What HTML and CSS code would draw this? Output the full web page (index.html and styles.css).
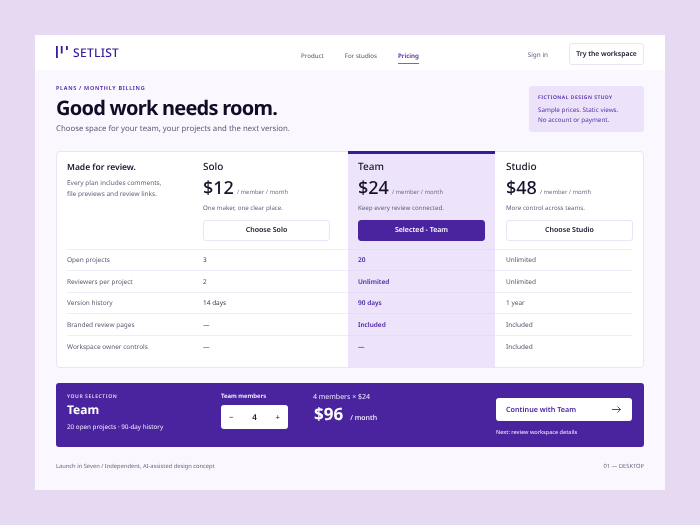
FILE: index.html
```html
<!DOCTYPE html>
<html lang="en">

<head>
    <meta charset="UTF-8">
    <meta name="viewport" content="width=device-width, initial-scale=1.0">
    <title>Setlist Pricing</title>
    <link rel="stylesheet" href="styles.css">
</head>

<body>

    <div class="window">
        <header class="topbar">
            <div class="brand">
                <svg class="brand-mark" width="12" height="12" viewBox="0 0 12 12">
                    <rect x="0" y="0" width="1.8" height="12" fill="#3a1a9c"></rect>
                    <rect x="4.8" y="0" width="1.8" height="7.5" fill="#3a1a9c"></rect>
                    <rect x="10" y="0" width="1.8" height="4" fill="#3a1a9c"></rect>
                </svg>
                <span class="brand-name">SETLIST</span>
            </div>
            <nav class="nav">
                <a>Product</a>
                <a>For studios</a>
                <a class="active">Pricing</a>
            </nav>
            <div class="top-actions">
                <a class="sign-in">Sign in</a>
                <button class="try-btn">Try the workspace</button>
            </div>
        </header>

        <main class="content">
            <section class="intro">
                <div>
                    <p class="eyebrow">PLANS / MONTHLY BILLING</p>
                    <h1>Good work needs room.</h1>
                    <p class="lead">Choose space for your team, your projects and the next version.</p>
                </div>
                <aside class="note">
                    <p class="note-title">FICTIONAL DESIGN STUDY</p>
                    <p>Sample prices. Static views.<br>No account or payment.</p>
                </aside>
            </section>

            <section class="plans">
                <div class="plan-row">
                    <div class="plan-cell plan-intro">
                        <h2>Made for review.</h2>
                        <p>Every plan includes comments,<br>file previews and review links.</p>
                    </div>
                    <div class="plan-cell solo">
                        <h3>Solo</h3>
                        <p class="price"><strong>$12</strong><span>/ member / month</span></p>
                        <p class="tagline">One maker, one clear place.</p>
                        <button class="choose">Choose Solo</button>
                    </div>
                    <div class="plan-cell team">
                        <h3>Team</h3>
                        <p class="price"><strong>$24</strong><span>/ member / month</span></p>
                        <p class="tagline">Keep every review connected.</p>
                        <button class="choose selected">Selected - Team</button>
                    </div>
                    <div class="plan-cell studio">
                        <h3>Studio</h3>
                        <p class="price"><strong>$48</strong><span>/ member / month</span></p>
                        <p class="tagline">More control across teams.</p>
                        <button class="choose">Choose Studio</button>
                    </div>
                </div>

                <div class="row">
                    <div class="label">Open projects</div>
                    <div>3</div>
                    <div class="team">20</div>
                    <div class="studio">Unlimited</div>
                </div>
                <div class="row">
                    <div class="label">Reviewers per project</div>
                    <div>2</div>
                    <div class="team">Unlimited</div>
                    <div class="studio">Unlimited</div>
                </div>
                <div class="row">
                    <div class="label">Version history</div>
                    <div>14 days</div>
                    <div class="team">90 days</div>
                    <div class="studio">1 year</div>
                </div>
                <div class="row">
                    <div class="label">Branded review pages</div>
                    <div>—</div>
                    <div class="team">Included</div>
                    <div class="studio">Included</div>
                </div>
                <div class="row last">
                    <div class="label">Workspace owner controls</div>
                    <div>—</div>
                    <div class="team">—</div>
                    <div class="studio">Included</div>
                </div>
            </section>

            <section class="summary">
                <div class="sum-plan">
                    <p class="sum-eyebrow">YOUR SELECTION</p>
                    <p class="sum-name">Team</p>
                    <p class="sum-detail">20 open projects · 90-day history</p>
                </div>
                <div class="sum-members">
                    <p class="members-label">Team members</p>
                    <div class="stepper">
                        <span>−</span>
                        <strong>4</strong>
                        <span>+</span>
                    </div>
                </div>
                <div class="sum-total">
                    <p class="total-calc">4 members × $24</p>
                    <p class="total"><strong>$96</strong><span>/ month</span></p>
                </div>
                <div class="sum-action">
                    <button class="continue">
                        Continue with Team
                        <svg width="9" height="7" viewBox="0 0 9 7" fill="none" stroke="#4a239f" stroke-width="0.9">
                            <path d="M0 3.5H8.4M5.4 0.5L8.4 3.5L5.4 6.5"></path>
                        </svg>
                    </button>
                    <p class="next">Next: review workspace details</p>
                </div>
            </section>

            <footer class="foot">
                <span>Launch in Seven / Independent, AI-assisted design concept</span>
                <span>01 — DESKTOP</span>
            </footer>
        </main>
    </div>

</body>

</html>
```

FILE: styles.css
```css
* {
    box-sizing: border-box;
}

body {
    margin: 0;
    height: 525px;
    padding: 35px;
    background: #e6daf3;
    font-family: 'Noto Sans', sans-serif;
    color: #16122b;
    overflow: hidden;
    text-rendering: geometricPrecision;
}

p, h1, h2, h3 {
    margin: 0;
}

button {
    font-family: inherit;
    text-rendering: geometricPrecision;
}

.window {
    width: 630px;
    height: 455px;
    background: #faf7ff;
    will-change: transform;
}

/* top bar */
.topbar {
    height: 35px;
    background: #fff;
    display: flex;
    align-items: center;
    padding: 0 21px;
}

.brand {
    width: 245px;
    display: flex;
    align-items: center;
    gap: 5px;
}

.brand-mark {
    margin-top: -2px;
}

.brand-name {
    font-size: 12px;
    font-weight: 500;
    letter-spacing: 0.3px;
    color: #3a1a9c;
}

.nav {
    display: flex;
    gap: 21px;
    font-size: 6.2px;
    color: #56526a;
    padding-top: 6px;
}

.nav a {
    position: relative;
}

.nav .active {
    color: #4a239f;
    font-weight: 600;
}

.nav .active::after {
    content: "";
    position: absolute;
    left: 0;
    right: 0;
    bottom: -4px;
    height: 1px;
    background: #c2574f;
}

.top-actions {
    margin-left: auto;
    display: flex;
    align-items: center;
    gap: 21px;
    padding-top: 2px;
}

.sign-in {
    font-size: 6.4px;
    color: #66627a;
    padding-top: 2px;
}

.try-btn {
    width: 75px;
    height: 22px;
    padding: 0;
    background: #fff;
    border: 1px solid #ebe3f7;
    border-radius: 3px;
    font-size: 6.8px;
    font-weight: 600;
    color: #16122b;
}

/* intro */
.content {
    padding: 15px 21px 0;
}

.intro {
    display: flex;
    justify-content: space-between;
    height: 52px;
}

.eyebrow {
    font-size: 5.5px;
    font-weight: 600;
    letter-spacing: 0.7px;
    color: #4a239f;
    line-height: 7px;
}

h1 {
    font-size: 20px;
    font-weight: 700;
    line-height: 28px;
    letter-spacing: -0.75px;
    margin-top: 2px;
    color: #100c26;
}

.lead {
    font-size: 7.8px;
    line-height: 12px;
    margin-top: 1px;
    color: #5e5a72;
}

.note {
    width: 115px;
    height: 46px;
    margin-top: 1px;
    padding: 9px;
    background: #ece3fa;
    border-radius: 3px;
    font-size: 6.3px;
    line-height: 10px;
    color: #5a35a8;
}

.note-title {
    font-size: 5px;
    font-weight: 600;
    letter-spacing: 0.5px;
    line-height: 7px;
    margin-bottom: 3px;
    color: #4a239f;
}

/* plans table */
.plans {
    margin-top: 14px;
    height: 217px;
    background: #fff;
    border: 1px solid #ebe3f7;
    border-radius: 4px;
    padding-left: 10px;
}

.plan-row, .row {
    display: grid;
    grid-template-columns: 136px 145px 147px 1fr;
}

.plan-row {
    height: 97.5px;
    margin-top: -1px;
}

.plan-cell {
    padding-top: 9px;
}

.plan-intro {
    padding-top: 11px;
}

.plan-intro h2 {
    font-size: 8.5px;
    font-weight: 600;
    line-height: 12px;
}

.plan-intro p {
    margin-top: 3px;
    font-size: 6.5px;
    line-height: 11px;
    color: #66627a;
}

.plan-cell h3 {
    font-size: 10px;
    font-weight: 500;
    line-height: 13px;
}

.price {
    margin-top: 2.5px;
    display: flex;
    align-items: baseline;
    gap: 3px;
    line-height: 24px;
}

.price strong {
    font-size: 18px;
    font-weight: 500;
}

.price span {
    font-size: 5.9px;
    color: #726e85;
}

.tagline {
    font-size: 6.2px;
    line-height: 10px;
    margin-top: -0.5px;
    color: #66627a;
}

.choose {
    display: block;
    width: 127px;
    height: 21px;
    margin-top: 6.5px;
    padding: 1px 0 0;
    background: #fff;
    border: 1px solid #ebe3f7;
    border-radius: 3px;
    font-size: 7px;
    font-weight: 600;
    color: #16122b;
}

.choose.selected {
    background: #4a239f;
    border-color: #4a239f;
    color: #fff;
}

.plan-cell.team {
    background: #ede4fb;
    border-top: 3px solid #3a1a9c;
    padding: 6px 10px 0;
}

.plan-cell.studio {
    padding-left: 11px;
}

.row {
    height: 21.5px;
    font-size: 6.5px;
    color: #3e3a52;
}

.row > div {
    display: flex;
    align-items: center;
    border-top: 1px solid #f1ecf9;
}

.row .label {
    color: #5e5a72;
}

.row .team {
    background: #ede4fb;
    border-top-color: #e6dcf6;
    padding-left: 10px;
    font-weight: 600;
    color: #4a239f;
}

.row .studio {
    margin-right: 11px;
    padding-left: 11px;
    color: #56526a;
}

.row.last {
    height: 32.5px;
}

.row.last > div {
    padding-bottom: 10px;
}

/* summary */
.summary {
    margin-top: 15px;
    height: 64px;
    background: #4a239f;
    border-radius: 3px;
    display: flex;
    color: #fff;
    padding: 9px 11px;
}

.sum-plan {
    width: 154px;
    padding-top: 2px;
}

.sum-eyebrow {
    font-size: 5px;
    font-weight: 600;
    letter-spacing: 0.6px;
    line-height: 7px;
    color: #e3d8f7;
}

.sum-name {
    font-size: 12px;
    font-weight: 700;
    line-height: 18px;
}

.sum-detail {
    font-size: 6.3px;
    line-height: 12px;
    margin-top: 2px;
    color: #efe8fb;
}

.sum-members {
    width: 92px;
}

.members-label {
    font-size: 6px;
    font-weight: 600;
    line-height: 9px;
}

.stepper {
    width: 67px;
    height: 24px;
    margin-top: 4px;
    background: #fff;
    border-radius: 3px;
    display: flex;
    align-items: center;
    justify-content: space-between;
    padding: 0 8px;
    font-size: 8px;
    color: #16122b;
}

.stepper strong {
    font-weight: 600;
}

.sum-total {
    width: 183px;
    padding-top: 1px;
}

.total-calc {
    font-size: 7px;
    line-height: 10px;
    color: #efe8fb;
}

.total {
    display: flex;
    align-items: baseline;
    gap: 7px;
    line-height: 21px;
    padding-left: 1px;
}

.total strong {
    font-size: 17px;
    font-weight: 700;
}

.total span {
    font-size: 7px;
    font-weight: 500;
}

.sum-action {
    padding-top: 6px;
}

.continue {
    width: 136px;
    height: 23px;
    padding: 0 11px 0 10px;
    background: #fff;
    border: 0;
    border-radius: 3px;
    display: flex;
    align-items: center;
    justify-content: space-between;
    font-size: 7.2px;
    font-weight: 600;
    color: #4a239f;
}

.next {
    font-size: 5.5px;
    font-weight: 500;
    line-height: 8px;
    margin-top: 7px;
    color: #e3d8f7;
}

/* footer */
.foot {
    margin-top: 15px;
    display: flex;
    justify-content: space-between;
    font-size: 5.75px;
    line-height: 8px;
    color: #6a667e;
}
```
